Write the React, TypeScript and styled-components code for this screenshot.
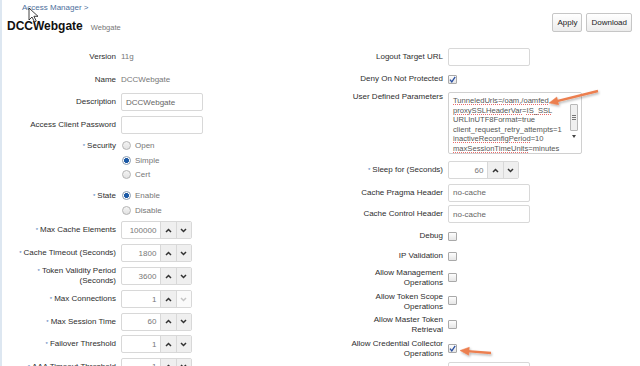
import React from 'react';
import styled, { createGlobalStyle } from 'styled-components';

const GlobalStyle = createGlobalStyle`
  html, body {
    margin: 0;
    padding: 0;
    background: #fff;
  }
  body {
    font-family: 'Liberation Sans', Arial, sans-serif;
    font-size: 8px;
    color: #333;
  }
`;

const Page = styled.div`
  position: relative;
  width: 640px;
  height: 366px;
  overflow: hidden;
  box-shadow: inset 2px 0 0 #dde7f1;
`;

const Header = styled.div`
  display: flex;
  justify-content: space-between;
  align-items: flex-start;
  height: 46px;
`;

const TitleBlock = styled.div`
  padding: 3px 0 0 7px;
`;

const Breadcrumb = styled.a`
  display: block;
  margin-left: 15px;
  font-size: 8px;
  line-height: 9px;
  color: #4d6f9d;
  text-decoration: none;
`;

const TitleRow = styled.div`
  display: flex;
  align-items: baseline;
  gap: 8px;
  margin-top: 7px;
`;

const Title = styled.h1`
  margin: 0;
  font-size: 12px;
  line-height: 14px;
  font-weight: bold;
  color: #111;
`;

const SubTitle = styled.span`
  font-size: 7.5px;
  color: #777;
`;

const Toolbar = styled.div`
  display: flex;
  gap: 4px;
  margin: 13px 8px 0 0;
`;

const Button = styled.button`
  height: 19px;
  padding: 0 4px;
  border: 1px solid #c6c6c6;
  border-radius: 2px;
  background: linear-gradient(#ffffff, #ececec);
  font-family: 'Liberation Sans', Arial, sans-serif;
  font-size: 8px;
  color: #222;
`;

const Form = styled.div`
  display: grid;
  grid-template-columns: 300px 340px;
  align-items: start;
`;

const Column = styled.div`
  display: flex;
  flex-direction: column;
`;

const Row = styled.div<{ $lw: number; $h?: number; $top?: boolean; $pt?: number; $pb?: number }>`
  display: grid;
  grid-template-columns: ${p => p.$lw}px 1fr;
  column-gap: 5px;
  align-items: ${p => (p.$top ? 'start' : 'center')};
  height: ${p => (p.$h ? `${p.$h}px` : 'auto')};
  padding-top: ${p => p.$pt ?? 0}px;
  padding-bottom: ${p => p.$pb ?? 0}px;
  box-sizing: border-box;
`;

const Label = styled.div<{ $lh?: number }>`
  text-align: right;
  white-space: nowrap;
  color: #2e2e2e;
  line-height: ${p => p.$lh ?? 10}px;
`;

const Req = styled.span`
  color: #4a78b8;
  font-size: 6px;
  vertical-align: top;
  margin-right: 2px;
`;

const Value = styled.span`
  color: #777;
  line-height: 10px;
`;

const TextInput = styled.div<{ $w?: number }>`
  width: ${p => p.$w ?? 82}px;
  height: 18px;
  box-sizing: border-box;
  border: 1px solid #d8d8d8;
  border-radius: 2px;
  padding: 0 4px;
  display: flex;
  align-items: center;
  color: #666;
  background: #fff;
`;

const Spinner = styled.div`
  display: flex;
  width: 71px;
  height: 18px;
  box-sizing: border-box;
  border: 1px solid #d8d8d8;
  border-radius: 2px;
  overflow: hidden;
`;

const SpinValue = styled.div`
  width: 40px;
  display: flex;
  align-items: center;
  justify-content: flex-end;
  padding-right: 4px;
  box-sizing: border-box;
  color: #777;
`;

const SpinButton = styled.div<{ $disabled?: boolean }>`
  width: 15px;
  display: flex;
  align-items: center;
  justify-content: center;
  border-left: 1px solid #d8d8d8;
  background: ${p => (p.$disabled ? '#fafafa' : '#efefef')};
  color: ${p => (p.$disabled ? '#c4c4c4' : '#333')};
`;

const RadioGroup = styled.div`
  display: flex;
  flex-direction: column;
`;

const RadioItem = styled.div`
  display: flex;
  align-items: center;
  gap: 4px;
  height: 14.5px;
  color: #777;
  padding-left: 1px;
`;

const RadioDot = styled.span<{ $on?: boolean }>`
  width: 9px;
  height: 9px;
  box-sizing: border-box;
  border-radius: 50%;
  border: 1px solid ${p => (p.$on ? '#8a9bb0' : '#b4b4b4')};
  background: ${p =>
    p.$on
      ? 'radial-gradient(circle, #1c5aa6 0 2.2px, #fff 2.8px)'
      : 'linear-gradient(#f4f4f4, #e2e2e2)'};
`;

const CheckBox = styled.span<{ $mt?: number }>`
  display: inline-flex;
  align-items: center;
  justify-content: center;
  width: 9px;
  height: 9px;
  box-sizing: border-box;
  margin-top: ${p => p.$mt ?? 0}px;
  border: 1px solid #a9a9a9;
  border-radius: 1px;
  background: linear-gradient(#fdfdfd, #e6e6e6);
`;

const TextArea = styled.div`
  position: relative;
  width: 134px;
  height: 62px;
  box-sizing: border-box;
  border: 1px solid #d0d0d0;
  border-radius: 2px;
  padding: 3px 14px 0 4px;
  overflow: hidden;
  color: #555;
  font-size: 7.6px;
  line-height: 9.6px;
  white-space: nowrap;
`;

const Spell = styled.span`
  text-decoration: underline dotted rgba(226, 70, 70, 0.8);
  text-decoration-thickness: 1px;
  text-underline-offset: 1px;
`;

const ScrollTrack = styled.div`
  position: absolute;
  top: 2px;
  right: 3px;
  width: 8px;
  height: 50px;
  display: flex;
  flex-direction: column;
  align-items: center;
  background: #fff;
`;

const ScrollThumb = styled.div`
  margin-top: 9px;
  width: 8px;
  height: 27px;
  box-sizing: border-box;
  border: 1px solid #b8b8b8;
  border-radius: 1px;
  background: #f0f0f0;
  display: flex;
  flex-direction: column;
  justify-content: center;
  align-items: center;
  gap: 1px;
  & > i {
    display: block;
    width: 4px;
    height: 1px;
    background: #777;
  }
`;

const ScrollArrow = styled.div`
  margin-top: 4px;
  width: 0;
  height: 0;
  border-left: 2px solid transparent;
  border-right: 2px solid transparent;
  border-top: 3px solid #444;
`;

const Overlay = styled.svg`
  position: absolute;
  left: 0;
  top: 0;
  pointer-events: none;
`;

const Chevron = ({ up }: { up?: boolean }) => (
  <svg width="7" height="5" viewBox="0 0 7 5">
    <polyline
      points={up ? '1,4 3.5,1.5 6,4' : '1,1 3.5,3.5 6,1'}
      fill="none"
      stroke="currentColor"
      strokeWidth="1.5"
    />
  </svg>
);

const Tick = () => (
  <svg width="7" height="7" viewBox="0 0 7 7">
    <polyline points="1,3.6 2.8,5.8 6.2,0.8" fill="none" stroke="#2a4fa0" strokeWidth="1.3" />
  </svg>
);

const NumberSpin = ({ value, downOff }: { value: string; downOff?: boolean }) => (
  <Spinner>
    <SpinValue>{value}</SpinValue>
    <SpinButton>
      <Chevron up />
    </SpinButton>
    <SpinButton $disabled={downOff}>
      <Chevron />
    </SpinButton>
  </Spinner>
);

const L = 116;
const R = 143;

const App = () => {
  return (
    <Page>
      <GlobalStyle />
      <Header>
        <TitleBlock>
          <Breadcrumb>Access Manager &gt;</Breadcrumb>
          <TitleRow>
            <Title>DCCWebgate</Title>
            <SubTitle>Webgate</SubTitle>
          </TitleRow>
        </TitleBlock>
        <Toolbar>
          <Button>Apply</Button>
          <Button>Download</Button>
        </Toolbar>
      </Header>

      <Form>
        <Column>
          <Row $lw={L} $h={22.5}>
            <Label>Version</Label>
            <Value>11g</Value>
          </Row>
          <Row $lw={L} $h={22.5}>
            <Label>Name</Label>
            <Value>DCCWebgate</Value>
          </Row>
          <Row $lw={L} $h={22.5}>
            <Label>Description</Label>
            <TextInput>DCCWebgate</TextInput>
          </Row>
          <Row $lw={L} $h={22.5}>
            <Label>Access Client Password</Label>
            <TextInput />
          </Row>
          <Row $lw={L} $top $pt={2.5} $pb={3.5}>
            <Label $lh={14.5}>
              <Req>*</Req>Security
            </Label>
            <RadioGroup>
              <RadioItem>
                <RadioDot />
                Open
              </RadioItem>
              <RadioItem>
                <RadioDot $on />
                Simple
              </RadioItem>
              <RadioItem>
                <RadioDot />
                Cert
              </RadioItem>
            </RadioGroup>
          </Row>
          <Row $lw={L} $top $pt={3} $pb={1}>
            <Label $lh={14.5}>
              <Req>*</Req>State
            </Label>
            <RadioGroup>
              <RadioItem>
                <RadioDot $on />
                Enable
              </RadioItem>
              <RadioItem>
                <RadioDot />
                Disable
              </RadioItem>
            </RadioGroup>
          </Row>
          <Row $lw={L} $h={23}>
            <Label>
              <Req>*</Req>Max Cache Elements
            </Label>
            <NumberSpin value="100000" />
          </Row>
          <Row $lw={L} $h={23}>
            <Label>
              <Req>*</Req>Cache Timeout (Seconds)
            </Label>
            <NumberSpin value="1800" />
          </Row>
          <Row $lw={L} $h={23.5}>
            <Label>
              <Req>*</Req>Token Validity Period
              <br />
              (Seconds)
            </Label>
            <NumberSpin value="3600" />
          </Row>
          <Row $lw={L} $h={22.5}>
            <Label>
              <Req>*</Req>Max Connections
            </Label>
            <NumberSpin value="1" downOff />
          </Row>
          <Row $lw={L} $h={22.5}>
            <Label>
              <Req>*</Req>Max Session Time
            </Label>
            <NumberSpin value="60" />
          </Row>
          <Row $lw={L} $h={22.5}>
            <Label>
              <Req>*</Req>Failover Threshold
            </Label>
            <NumberSpin value="1" />
          </Row>
          <Row $lw={L} $h={22.5}>
            <Label>
              <Req>*</Req>AAA Timeout Threshold
            </Label>
            <NumberSpin value="-1" />
          </Row>
        </Column>

        <Column>
          <Row $lw={R} $h={22.5}>
            <Label>Logout Target URL</Label>
            <TextInput />
          </Row>
          <Row $lw={R} $h={21.5}>
            <Label>Deny On Not Protected</Label>
            <CheckBox>
              <Tick />
            </CheckBox>
          </Row>
          <Row $lw={R} $h={68.5} $top $pt={2}>
            <Label>User Defined Parameters</Label>
            <TextArea>
              <Spell>TunneledUrls=/oam,/oamfed</Spell>
              <br />
              <Spell>proxySSLHeaderVar</Spell>=<Spell>IS_SSL</Spell>
              <br />
              URLInUTF8Format=true
              <br />
              client_request_retry_attempts=1
              <br />
              <Spell>inactiveReconfigPeriod</Spell>=10
              <br />
              <Spell>maxSessionTimeUnits</Spell>=minutes
              <ScrollTrack>
                <ScrollThumb>
                  <i />
                  <i />
                  <i />
                </ScrollThumb>
                <ScrollArrow />
              </ScrollTrack>
            </TextArea>
          </Row>
          <Row $lw={R} $h={23}>
            <Label>
              <Req>*</Req>Sleep for (Seconds)
            </Label>
            <NumberSpin value="60" />
          </Row>
          <Row $lw={R} $h={22}>
            <Label>Cache Pragma Header</Label>
            <TextInput>no-cache</TextInput>
          </Row>
          <Row $lw={R} $h={21.5}>
            <Label>Cache Control Header</Label>
            <TextInput>no-cache</TextInput>
          </Row>
          <Row $lw={R} $h={22}>
            <Label>Debug</Label>
            <CheckBox />
          </Row>
          <Row $lw={R} $h={18}>
            <Label>IP Validation</Label>
            <CheckBox />
          </Row>
          <Row $lw={R} $h={23.7} $top $pt={3}>
            <Label>
              Allow Management
              <br />
              Operations
            </Label>
            <CheckBox $mt={4.5} />
          </Row>
          <Row $lw={R} $h={23.7} $top $pt={3}>
            <Label>
              Allow Token Scope
              <br />
              Operations
            </Label>
            <CheckBox $mt={4.5} />
          </Row>
          <Row $lw={R} $h={23.7} $top $pt={3}>
            <Label>
              Allow Master Token
              <br />
              Retrieval
            </Label>
            <CheckBox $mt={4.5} />
          </Row>
          <Row $lw={R} $h={23.7} $top $pt={3}>
            <Label>
              Allow Credential Collector
              <br />
              Operations
            </Label>
            <CheckBox $mt={4.5}>
              <Tick />
            </CheckBox>
          </Row>
          <Row $lw={R} $h={22.5}>
            <Label>IP Validation Exceptions</Label>
            <TextInput />
          </Row>
        </Column>
      </Form>

      <Overlay width="640" height="366" viewBox="0 0 640 366">
        <defs>
          <filter id="shade" x="-20%" y="-50%" width="140%" height="200%">
            <feDropShadow dx="1" dy="1.5" stdDeviation="1" floodColor="#000" floodOpacity="0.3" />
          </filter>
        </defs>
        <g filter="url(#shade)" fill="#ec7f4f" stroke="#ec7f4f">
          <line x1="598" y1="91" x2="556" y2="101.3" strokeWidth="2.4" />
          <polygon points="549,103 558.7,104.8 556.8,97" strokeWidth="0.5" />
          <line x1="491" y1="353" x2="467" y2="351.1" strokeWidth="2.4" />
          <polygon points="460,350.5 469.3,347.2 468.7,355.2" strokeWidth="0.5" />
        </g>
        <path
          d="M29 8 L29 20 L32 17 L34.5 22 L36.3 21.1 L33.9 16.3 L38 16.3 Z"
          fill="#fff"
          stroke="#111"
          strokeWidth="0.8"
          strokeLinejoin="round"
        />
      </Overlay>
    </Page>
  );
};

export default App;
